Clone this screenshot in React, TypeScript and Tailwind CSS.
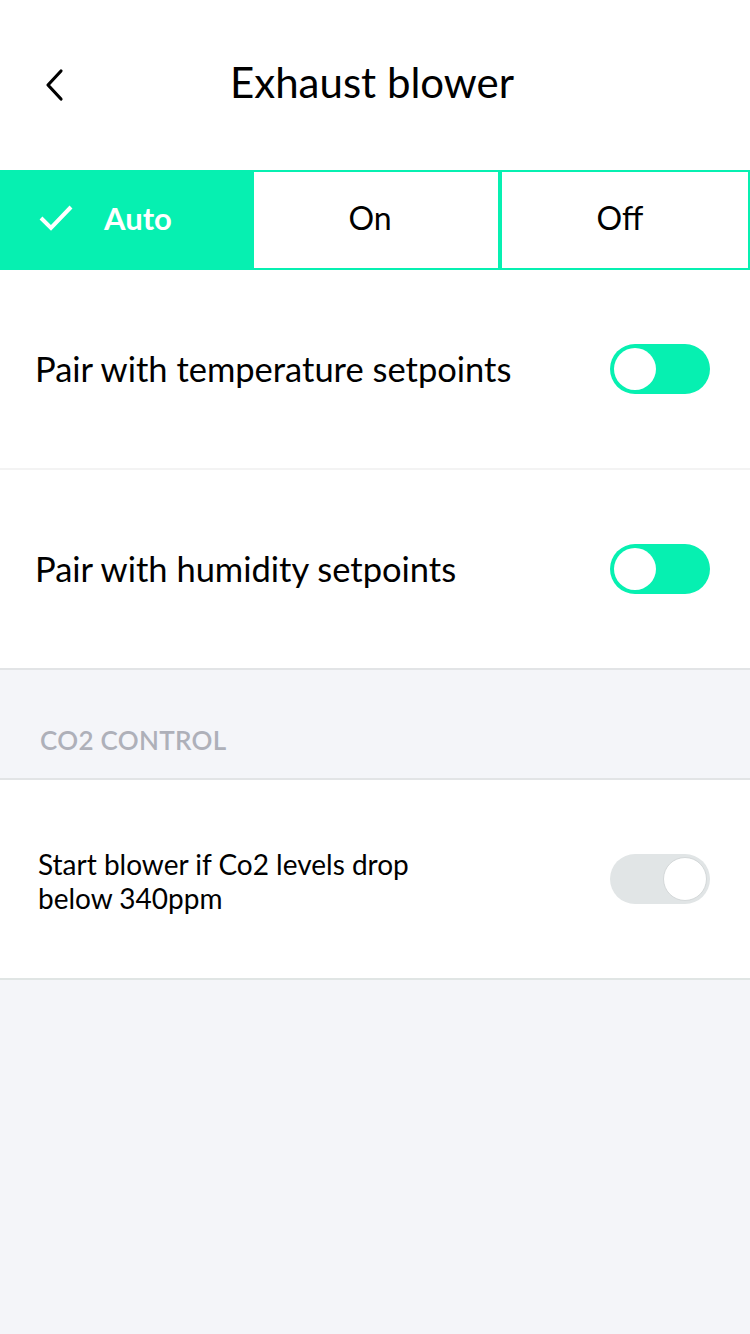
import React, { useState } from "react";

function Toggle({ on, color }: { on: boolean; color: "green" | "gray" }) {
  return (
    <div
      className={
        color === "green"
          ? "w-[100px] h-[50px] rounded-full bg-[#06f0b1] flex items-center px-[4px] justify-start"
          : "w-[100px] h-[50px] rounded-full bg-[#e1e5e6] flex items-center px-[3px] justify-end"
      }
    >
      <div
        className={
          on
            ? "w-[42px] h-[42px] rounded-full bg-white"
            : "w-[44px] h-[44px] rounded-full bg-white border border-[#d4d8d9]"
        }
      />
    </div>
  );
}

export default function App() {
  const [mode, setMode] = useState("Auto");
  const modes = ["Auto", "On", "Off"];

  return (
    <div
      className="min-h-[1334px] bg-[#f4f5f9] flex flex-col"
      style={{ fontFamily: "Lato, 'Open Sans', sans-serif" }}
    >
      <div className="bg-white h-[170px] relative flex items-start justify-center pt-[54px] pr-[6px]">
        <button className="absolute left-[40px] top-[66px] w-[28px] h-[38px] flex items-center justify-center">
          <svg width="24" height="36" viewBox="0 0 24 36" fill="none">
            <path d="M19 4 L6 18 L19 32" stroke="#000" strokeWidth="3.2" strokeLinecap="round" strokeLinejoin="round" />
          </svg>
        </button>
        <h1 className="text-[42px] leading-[56px] text-black">Exhaust blower</h1>
      </div>

      <div className="flex h-[100px] bg-white">
        {modes.map((m, i) => (
          <button
            key={m}
            onClick={() => setMode(m)}
            className={
              mode === m
                ? "w-[254px] bg-[#06f0b1] text-white font-bold text-[31px] flex items-center justify-start pl-[38px] gap-[30px] pb-[4px]"
                : i === 1
                ? "w-[246px] border-2 border-[#06f0b1] border-l-0 text-black text-[32px] flex items-center justify-center pr-[12px] pb-[4px]"
                : "flex-1 border-2 border-[#06f0b1] border-l-2 text-black text-[32px] flex items-center justify-center pr-[10px] pb-[4px]"
            }
          >
            {mode === m && (
              <svg width="36" height="28" viewBox="0 0 36 28" fill="none">
                <path d="M3 14 L13 24 L33 3" stroke="#fff" strokeWidth="4" strokeLinejoin="miter" />
              </svg>
            )}
            <span>{m}</span>
          </button>
        ))}
      </div>

      <div className="bg-white h-[200px] flex items-center justify-between pl-[35px] pr-[40px] border-b-2 border-[#f3f3f3]">
        <span className="text-[34.5px] text-black">Pair with temperature setpoints</span>
        <Toggle on color="green" />
      </div>
      <div className="bg-white h-[200px] flex items-center justify-between pl-[35px] pr-[40px] border-b-2 border-[#e2e4e6]">
        <span className="text-[34.5px] text-black">Pair with humidity setpoints</span>
        <Toggle on color="green" />
      </div>

      <div className="h-[110px] flex items-end pl-[40px] pb-[18px] border-b-2 border-[#e2e4e6]">
        <span className="text-[26px] font-semibold text-[#aeb0b9] tracking-[0.3px]">CO2 CONTROL</span>
      </div>

      <div className="bg-white h-[200px] flex items-center justify-between pl-[38px] pr-[40px] border-b-2 border-[#e0e5e4]">
        <span className="text-[28px] leading-[34px] text-black w-[420px] pt-[4px]">
          Start blower if Co2 levels drop below 340ppm
        </span>
        <Toggle on={false} color="gray" />
      </div>
    </div>
  );
}
